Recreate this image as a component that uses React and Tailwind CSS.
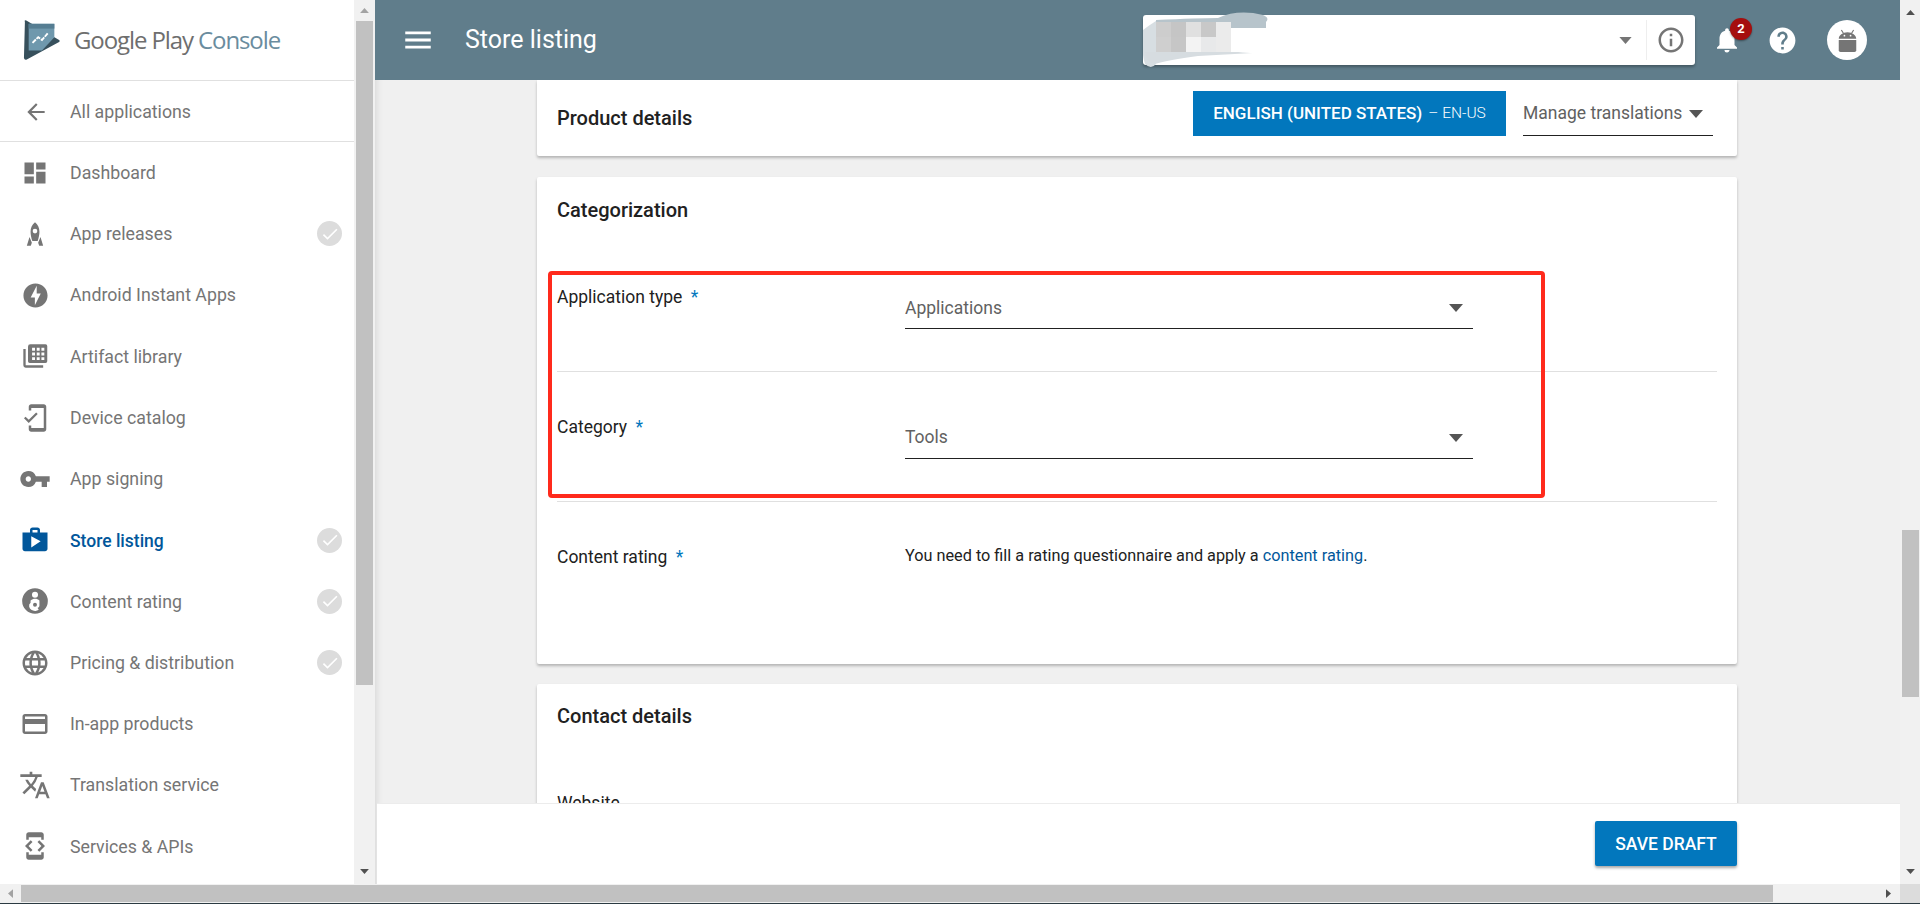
import React from "react";
import {
  MdDashboard, MdArrowBack, MdOfflineBolt, MdMobileFriendly, MdVpnKey, MdShop, MdLanguage,
  MdCreditCard, MdTranslate, MdDeveloperMode, MdCheck, MdNotifications, MdHelp,
  MdInfoOutline, MdMenu,
} from "react-icons/md";

const Rocket = ({ className }) => (
  <svg viewBox="0 0 24 24" className={className} fill="currentColor">
    <path d="M12 2c-2.600 2-3.800 5-3.800 8 0 2.600.6 5.200 1.500 8h4.600c.9-2.800 1.500-5.400 1.500-8 0-3-1.200-6-3.800-8zm0 9.500a2 2 0 1 1 0-4 2 2 0 0 1 0 4z" />
    <path d="M7.300 14.500 5 22h3.400l.9-2.600zM16.700 14.500 19 22h-3.400l-.9-2.600z" />
  </svg>
);

const Library = ({ className }) => (
  <svg viewBox="0 0 24 24" className={className} fill="currentColor">
    <path d="M2 6h2v14h15v2H4a2 2 0 0 1-2-2z" />
    <path fillRule="evenodd" d="M8 2h13a1.500 1.500 0 0 1 1.500 1.500v13A1.500 1.500 0 0 1 21 18H7.500A1.500 1.500 0 0 1 6 16.500V4a2 2 0 0 1 2-2zm1.500 3v2.500H12V5zm4 0v2.500H16V5zm4 0v2.500H20V5zm-8 4v2.500H12V9zm4 0v2.500H16V9zm4 0v2.500H20V9zm-8 4v2.500H12V13zm4 0v2.500H16V13zm4 0v2.500H20V13z" />
  </svg>
);

const Rating = ({ className }) => (
  <svg viewBox="0 0 24 24" className={className} fill="currentColor">
    <path fillRule="evenodd" d="M12 1a11 11 0 1 0 0 22 11 11 0 0 0 0-22zm0 3a2.600 2.600 0 1 1 0 5.200A2.600 2.600 0 0 1 12 4zm-3.800 7.500c1.200-1.100 2.500-1.500 3.800-1.500 1.500 0 2.800.5 3.800 1.500V16c0 .5-.2 1-.6 1.300l-1 .7 1 1.200c-1 .8-2.100 1.300-3.200 1.300-2.300 0-4.500-1.300-5-3.500a3.500 3.500 0 0 1 1.200-3.500zM12 13.600a1.700 1.700 0 1 0 0 3.400 1.700 1.700 0 0 0 0-3.400z" />
  </svg>
);

const AndroidFigure = ({ className }) => (
  <svg viewBox="0 0 24 26" className={className} fill="currentColor">
    <path d="M5 1 7.500 5M19 1l-2.500 4" stroke="currentColor" strokeWidth="1.300" fill="none" />
    <path fillRule="evenodd" d="M2 11c0-4 4.500-7.500 10-7.500s10 3.500 10 7.500zM8.500 6.500a1 1 0 1 0 0 2 1 1 0 0 0 0-2zm7 0a1 1 0 1 0 0 2 1 1 0 0 0 0-2z" />
    <path d="M2 12.500h20V24a2 2 0 0 1-2 2H4a2 2 0 0 1-2-2z" />
  </svg>
);

const Logo = () => (
  <svg viewBox="0 0 40 44" className="w-[38px] h-[42px]">
    <path d="M2 3 Q1 .5 3.500 1.500 L38 22 Q39.500 23 38 24 L4 42.500 Q1.500 43.500 1 41z" fill="#37505c" />
    <path d="M6 5 L33 5 L33 19 L20 33 L6 33z" fill="#6f98ad" />
    <path d="M6 5 L33 5 L33 10 L6 10z" fill="#557d92" />
    <path d="M10 25 L16 19 L20 22 L26 15" fill="none" stroke="#fff" strokeWidth="2" strokeDasharray="5 1" />
  </svg>
);

const Smudge = () => (
  <svg viewBox="0 0 150 60" className="absolute left-0 top-[-3px] w-[150px] h-[60px]">
    <path d="M13 8 Q55 6 75 6 Q95 -3 120 3 Q127 6 123 10 L123 16 L13 16z" fill="#b7c4cb" />
    <path d="M0 18 Q8 12 13 9 L13 52 Q8 58 2 52 Q-2 40 0 18z" fill="#d7dee2" />
    <rect x="13" y="10" width="15" height="15" fill="#cdcdcd" />
    <rect x="28" y="10" width="15" height="15" fill="#c5c5c5" />
    <rect x="43" y="10" width="15" height="15" fill="#e0e0e0" />
    <rect x="58" y="10" width="15" height="15" fill="#c8c8c8" />
    <rect x="73" y="10" width="15" height="15" fill="#ebebeb" />
    <rect x="13" y="25" width="15" height="15" fill="#cfcfcf" />
    <rect x="28" y="25" width="15" height="15" fill="#c6c6c6" />
    <rect x="43" y="25" width="15" height="15" fill="#f3f3f3" />
    <rect x="58" y="25" width="15" height="15" fill="#e8e9ea" />
    <rect x="73" y="25" width="15" height="15" fill="#ebebeb" />
    <path d="M2 40 L95 40 Q105 41 110 41 L55 44 Q25 48 12 52 Q4 50 2 40z" fill="#d6dce0" />
  </svg>
);

const Caret = ({ className }) => (
  <svg viewBox="0 0 14 8" className={className} fill="currentColor"><path d="M0 0h14L7 8z" /></svg>
);

const nav = [
  { label: "Dashboard", Icon: MdDashboard, s: "w-[28px] h-[28px]" },
  { label: "App releases", Icon: Rocket, check: true, s: "w-[28px] h-[28px]" },
  { label: "Android Instant Apps", Icon: MdOfflineBolt, s: "w-[29px] h-[29px]" },
  { label: "Artifact library", Icon: Library, s: "w-[28px] h-[28px]" },
  { label: "Device catalog", Icon: MdMobileFriendly, s: "w-[30px] h-[30px]" },
  { label: "App signing", Icon: MdVpnKey, s: "w-[32px] h-[32px]" },
  { label: "Store listing", Icon: MdShop, check: true, active: true, s: "w-[30px] h-[30px]" },
  { label: "Content rating", Icon: Rating, check: true, s: "w-[28px] h-[28px]" },
  { label: "Pricing & distribution", Icon: MdLanguage, check: true, s: "w-[30px] h-[30px]" },
  { label: "In-app products", Icon: MdCreditCard, s: "w-[30px] h-[30px]" },
  { label: "Translation service", Icon: MdTranslate, s: "w-[32px] h-[32px]" },
  { label: "Services & APIs", Icon: MdDeveloperMode, s: "w-[30px] h-[30px]" },
];

const Select = ({ value, h }) => (
  <div className={`w-[568px] mt-[30px] flex items-center justify-between border-b border-[#212121] text-[17.5px] text-[#616161] ${h}`}>
    <span>{value}</span>
    <Caret className="w-[14px] h-[8px] mr-[10px] text-[#555]" />
  </div>
);

const Req = ({ children, top }) => (
  <div className={`w-[348px] shrink-0 text-[17.5px] leading-[22px] text-[#212121] ${top}`}>
    {children} <span className="ml-1 text-[#0277bd]">*</span>
  </div>
);

export default function App() {
  return (
    <div className="w-[1920px] h-[904px] overflow-hidden flex flex-col bg-white text-[17.75px]" style={{ fontFamily: "Roboto, 'Liberation Sans', sans-serif" }}>
      <div className="flex h-[884px] shrink-0">
        <aside className="w-[354px] shrink-0 overflow-hidden bg-white text-[#757575]">
          <div className="h-[81px] border-b border-[#e0e0e0] flex items-center pl-[23px] gap-[13px]">
            <Logo />
            <span className="text-[24px] tracking-[-1.1px] font-normal whitespace-nowrap" style={{ fontFamily: "'Open Sans', Roboto, sans-serif" }}>
              <span className="text-[#6e6e6e]">Google Play</span> <span className="text-[#6a8c9e]">Console</span>
            </span>
          </div>
          <div className="h-[61px] border-b border-[#e0e0e0] flex items-center pt-[2px]">
            <span className="w-[70px] flex justify-center pl-[1px]"><MdArrowBack className="w-[26px] h-[26px]" /></span>
            <span>All applications</span>
          </div>
          {nav.map(({ label, Icon, check, active, s }) => (
            <div key={label} className={`h-[61.25px] flex items-center pr-[12px] ${active ? "text-[#01579b] font-medium text-[17.5px]" : ""}`}>
              <span className="w-[70px] flex justify-center"><Icon className={s} /></span>
              <span className="flex-1 pt-[1px]">{label}</span>
              {check && (
                <span className="w-[25px] h-[25px] rounded-full bg-[#dcdcdc] flex items-center justify-center text-white"><MdCheck className="w-[20px] h-[20px]" /></span>
              )}
            </div>
          ))}
        </aside>

        <div className="w-[21px] shrink-0 bg-[#f1f1f1] flex flex-col items-center relative">
          <div className="h-[21px] flex items-center justify-center"><Caret className="w-[9px] h-[5px] rotate-180 text-[#a3a3a3]" /></div>
          <div className="w-[17px] h-[664px] bg-[#c1c1c1] -ml-[1px]" />
          <div className="flex-1" />
          <div className="h-[26px] flex items-center justify-center"><Caret className="w-[9px] h-[5px] text-[#505050]" /></div>
        </div>

        <main className="flex-1 min-w-0 flex flex-col bg-[#f0f0f0] shadow-[inset_8px_0_8px_-8px_rgba(0,0,0,0.15)]">
          <header className="h-[80px] shrink-0 bg-[#607d8b] flex items-center text-white relative z-10">
            <MdMenu className="w-[34px] h-[34px] ml-[26px]" />
            <h1 className="ml-[30px] text-[25px] font-normal">Store listing</h1>
            <div className="ml-auto flex items-center">
              <div className="relative w-[552px] h-[50px] bg-white rounded-[3px] shadow-[0_2px_3px_rgba(0,0,0,0.3)] flex items-center">
                <Smudge />
                <Caret className="absolute left-[476px] top-[22px] w-[13px] h-[7px] text-[#757575]" />
                <div className="absolute left-[503px] top-[5px] w-px h-[40px] bg-[#eeeeee]" />
                <MdInfoOutline className="absolute left-[513px] top-[10px] w-[30px] h-[30px] text-[#757575]" />
              </div>
              <div className="relative ml-[17px] w-[30px] h-[30px]">
                <MdNotifications className="w-[30px] h-[30px]" />
                <span className="absolute left-[18px] top-[-7px] w-[22px] h-[22px] rounded-full bg-[#a50e0e] text-white text-[13px] font-bold flex items-center justify-center shadow-[0_1px_2px_rgba(0,0,0,0.4)]">2</span>
              </div>
              <MdHelp className="ml-[25px] w-[31px] h-[31px]" />
              <div className="ml-[29px] mr-[33px] w-[40px] h-[40px] rounded-full bg-white flex items-center justify-center text-[#757575]">
                <AndroidFigure className="w-[21px] h-[23px]" />
              </div>
            </div>
          </header>

          <div className="flex-1 min-h-0 overflow-hidden pl-[162px]">
            <section className="w-[1200px] h-[76px] bg-white rounded-b-[2px] shadow-[0_2px_3px_rgba(0,0,0,0.25)] flex pl-[20px] pr-[24px]">
              <h2 className="text-[20px] font-medium text-[#212121] mt-[26px] leading-[24px]">Product details</h2>
              <div className="ml-auto mt-[11px] w-[313px] h-[45px] bg-[#0277bd] text-white flex items-center justify-center text-[17px] font-medium pt-[1px]">
                ENGLISH (UNITED STATES)<span className="ml-[6px] font-light text-[15.5px]">– EN-US</span>
              </div>
              <div className="ml-[17px] mt-[11px] w-[190px] h-[45px] border-b border-[#212121] flex items-center text-[17.5px] text-[#616161] pt-[1px]">
                <span className="whitespace-nowrap">Manage translations</span>
                <Caret className="ml-[7px] w-[14px] h-[8px] text-[#555]" />
              </div>
            </section>

            <section className="relative w-[1200px] mt-[21px] h-[487px] bg-white rounded-[2px] shadow-[0_2px_3px_rgba(0,0,0,0.25)] px-[20px]">
              <h2 className="h-[64px] pt-[21px] text-[20px] font-medium leading-[24px] text-[#212121]">Categorization</h2>
              <div className="h-[131px] flex border-b border-[#e0e0e0]">
                <Req top="pt-[45px]">Application type</Req>
                <Select value="Applications" h="h-[58px] pt-[17px]" />
              </div>
              <div className="h-[130px] flex border-b border-[#e0e0e0]">
                <Req top="pt-[44px]">Category</Req>
                <Select value="Tools" h="h-[57px] pt-[15px]" />
              </div>
              <div className="flex">
                <Req top="pt-[44px]">Content rating</Req>
                <p className="pt-[43px] text-[16.25px] leading-[22px] text-[#212121]">
                  You need to fill a rating questionnaire and apply a <span className="text-[#01579b]">content rating</span>.
                </p>
              </div>
              <div className="absolute left-[11px] top-[94px] w-[997px] h-[227px] border-[4px] border-[#ff2a1c] rounded-[4px] pointer-events-none" />
            </section>

            <section className="w-[1200px] mt-[20px] h-[300px] bg-white rounded-[2px] shadow-[0_2px_3px_rgba(0,0,0,0.25)] px-[20px]">
              <h2 className="pt-[20px] text-[20px] font-medium leading-[24px] text-[#212121]">Contact details</h2>
              <div className="mt-[64px] text-[17.5px] leading-[22px] text-[#212121]">Website</div>
            </section>
          </div>

          <footer className="h-[81px] shrink-0 bg-white border-t border-[#ececec] ml-[2px] relative z-10 flex items-start justify-end pr-[163px] pt-[17px]">
            <button className="w-[142px] h-[45px] bg-[#0277bd] text-white text-[17.5px] font-medium rounded-[2px] shadow-[0_2px_3px_rgba(0,0,0,0.35)] pt-[1px]">SAVE DRAFT</button>
          </footer>
        </main>

        <div className="w-[20px] shrink-0 bg-[#f1f1f1] flex flex-col items-center">
          <div className="h-[24px] flex items-center justify-center"><Caret className="w-[9px] h-[5px] rotate-180 text-[#505050]" /></div>
          <div className="h-[506px] shrink-0" />
          <div className="w-[17px] h-[167px] bg-[#c1c1c1] shrink-0" />
          <div className="flex-1" />
          <div className="h-[26px] flex items-center justify-center"><Caret className="w-[9px] h-[5px] text-[#505050]" /></div>
        </div>
      </div>

      <div className="h-[20px] shrink-0 flex bg-[#f1f1f1] border-b border-[#2b3a42]">
        <div className="w-[21px] flex items-center justify-center"><Caret className="w-[9px] h-[5px] rotate-90 text-[#a3a3a3]" /></div>
        <div className="w-[1752px] h-[17px] mt-[1px] bg-[#c1c1c1]" />
        <div className="flex-1 flex items-center justify-end pr-[7px]"><Caret className="w-[9px] h-[5px] -rotate-90 text-[#505050]" /></div>
        <div className="w-[20px] bg-[#dcdcdc]" />
      </div>
    </div>
  );
}
